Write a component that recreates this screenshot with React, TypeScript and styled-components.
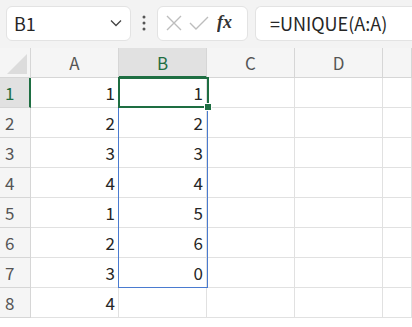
import React from "react"
import styled, { createGlobalStyle } from "styled-components"

const GlobalStyle = createGlobalStyle`
  html, body {
    margin: 0;
    padding: 0;
    background: #ffffff;
    overflow: hidden;
  }
  body {
    font-family: "Noto Sans CJK JP", "Liberation Sans", sans-serif;
  }
`

const Page = styled.div`
  width: 412px;
  height: 327px;
  overflow: hidden;
  background: #ffffff;
`

const Toolbar = styled.div`
  height: 48px;
  background: #f3f3f3;
  display: flex;
  align-items: center;
  padding: 0 0 2px 6px;
  box-sizing: border-box;
  gap: 0;
`

const Box = styled.div<{ $w?: number }>`
  height: 35px;
  box-sizing: border-box;
  background: #ffffff;
  border: 1px solid #e3e3e3;
  border-radius: 6px;
  display: flex;
  align-items: center;
  ${(p) => (p.$w ? `width: ${p.$w}px;` : "flex: 1;")}
`

const NameBox = styled(Box)`
  justify-content: space-between;
  padding: 0 8px 0 7px;
  font-size: 18px;
  color: #262626;
`

const Dots = styled.div`
  width: 26px;
  display: flex;
  justify-content: center;
`

const ButtonsBox = styled(Box)`
  justify-content: space-around;
  padding: 0 4px;
`

const FormulaBox = styled(Box)`
  margin-left: 7px;
  border-right: none;
  border-radius: 6px 0 0 6px;
  padding-left: 14px;
  font-size: 18px;
  color: #262626;
`

const Grid = styled.div`
  display: grid;
  grid-template-columns: 31px 88px 88px 88px 88px 1fr;
  grid-auto-rows: 30px;
  position: relative;
`

const Cell = styled.div`
  box-sizing: border-box;
  border-right: 1px solid #e1e1e1;
  border-bottom: 1px solid #e1e1e1;
  display: flex;
  align-items: center;
  justify-content: flex-end;
  padding-right: 3px;
  font-size: 17px;
  color: #262626;
`

const ColHead = styled.div<{ $sel?: boolean }>`
  box-sizing: border-box;
  background: ${(p) => (p.$sel ? "#e1e1e1" : "#f5f5f5")};
  border-right: 1px solid #d6d6d6;
  border-bottom: ${(p) => (p.$sel ? "2px solid #1e6e42" : "1px solid #d6d6d6")};
  display: flex;
  align-items: center;
  justify-content: center;
  font-size: 17px;
  color: ${(p) => (p.$sel ? "#1e6e42" : "#555555")};
`

const RowHead = styled.div<{ $sel?: boolean }>`
  box-sizing: border-box;
  background: ${(p) => (p.$sel ? "#e1e1e1" : "#f5f5f5")};
  border-right: ${(p) => (p.$sel ? "2px solid #1e6e42" : "1px solid #d6d6d6")};
  border-bottom: 1px solid #d6d6d6;
  display: flex;
  align-items: center;
  justify-content: flex-start;
  padding-left: 5px;
  font-size: 17px;
  color: ${(p) => (p.$sel ? "#1e6e42" : "#555555")};
`

const Corner = styled.div`
  box-sizing: border-box;
  background: #f5f5f5;
  border-right: 1px solid #d6d6d6;
  border-bottom: 1px solid #d6d6d6;
  position: relative;
  &::after {
    content: "";
    position: absolute;
    right: 3px;
    bottom: 3px;
    width: 0;
    height: 0;
    border-left: 20px solid transparent;
    border-bottom: 20px solid #dcdcdc;
  }
`

const SpillFrame = styled.div`
  position: absolute;
  left: 118px;
  top: 29px;
  width: 90px;
  height: 211px;
  box-sizing: border-box;
  border: 1px solid #4a7bd0;
  pointer-events: none;
`

const ActiveCell = styled.div`
  position: absolute;
  left: 118px;
  top: 29px;
  width: 91px;
  height: 31px;
  box-sizing: border-box;
  border: 2px solid #1e6e42;
  pointer-events: none;
  &::after {
    content: "";
    position: absolute;
    right: -5px;
    bottom: -5px;
    width: 6px;
    height: 6px;
    background: #1e6e42;
    border: 1px solid #ffffff;
  }
`

const colA = [1, 2, 3, 4, 1, 2, 3, 4]
const colB: (number | null)[] = [1, 2, 3, 4, 5, 6, 0, null]

export default function App() {
  return (
    <Page>
      <GlobalStyle />
      <Toolbar>
        <NameBox $w={125}>
          <span>B1</span>
          <svg width="12" height="8" viewBox="0 0 12 8">
            <path d="M1 1.5 L6 6.5 L11 1.5" fill="none" stroke="#444" strokeWidth="1.3" />
          </svg>
        </NameBox>
        <Dots>
          <svg width="4" height="16" viewBox="0 0 4 16">
            <circle cx="2" cy="2" r="1.5" fill="#555" />
            <circle cx="2" cy="8" r="1.5" fill="#555" />
            <circle cx="2" cy="14" r="1.5" fill="#555" />
          </svg>
        </Dots>
        <ButtonsBox $w={91}>
          <svg width="16" height="16" viewBox="0 0 16 16">
            <path d="M1 1 L15 15 M15 1 L1 15" stroke="#bdbdbd" strokeWidth="1.4" fill="none" />
          </svg>
          <svg width="20" height="16" viewBox="0 0 20 16">
            <path d="M1 8 L7 14 L19 2" stroke="#bdbdbd" strokeWidth="1.4" fill="none" />
          </svg>
          <svg width="22" height="20" viewBox="0 0 22 20">
            <text x="0" y="15" fontFamily="Liberation Serif, serif" fontStyle="italic" fontWeight="bold" fontSize="18" fill="#333">
              fx
            </text>
          </svg>
        </ButtonsBox>
        <FormulaBox>=UNIQUE(A:A)</FormulaBox>
      </Toolbar>
      <Grid>
        <Corner />
        <ColHead>A</ColHead>
        <ColHead $sel>B</ColHead>
        <ColHead>C</ColHead>
        <ColHead>D</ColHead>
        <ColHead />
        {colA.map((a, i) => (
          <React.Fragment key={i}>
            <RowHead $sel={i === 0}>{i + 1}</RowHead>
            <Cell>{a}</Cell>
            <Cell>{colB[i] ?? ""}</Cell>
            <Cell />
            <Cell />
            <Cell />
          </React.Fragment>
        ))}
        <SpillFrame />
        <ActiveCell />
      </Grid>
    </Page>
  )
}
